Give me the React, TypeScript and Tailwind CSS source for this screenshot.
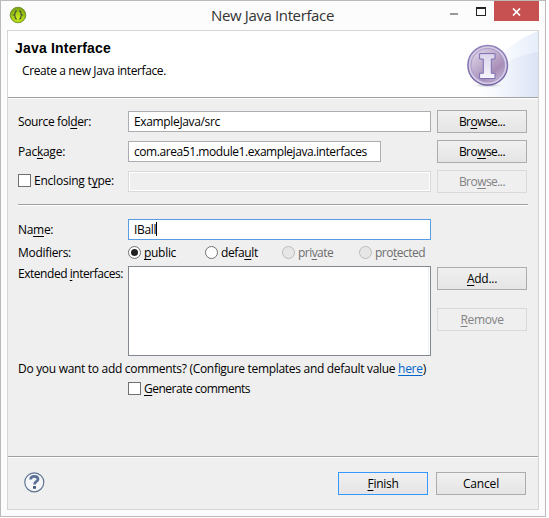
import type { ReactNode } from "react";

function Key({ children }: { children: ReactNode }) {
  return <span className="underline decoration-1 underline-offset-2 [text-decoration-skip-ink:none]">{children}</span>;
}

function Button({ children, tone = "normal", className = "" }: { children: ReactNode; tone?: "normal" | "disabled" | "primary"; className?: string }) {
  const tones = {
    normal: "border-[#acacac] bg-linear-to-b from-[#f0f0f0] to-[#e5e5e5] text-black",
    disabled: "border-[#d9d9d9] bg-[#efefef] text-[#838383]",
    primary: "border-[#3399ff] bg-linear-to-b from-[#f0f0f0] to-[#e5e5e5] text-black",
  };
  return (
    <button className={`flex h-[23px] w-[90px] shrink-0 items-start justify-center border pt-[2px] ${tones[tone]} ${className}`}>
      <span>{children}</span>
    </button>
  );
}

function Check() {
  return <span className="block size-[13px] shrink-0 border border-[#707070] bg-white" />;
}

function Radio({ children, checked, disabled, className = "" }: { children: ReactNode; checked?: boolean; disabled?: boolean; className?: string }) {
  return (
    <div className={`flex w-[77px] shrink-0 items-start gap-[3px] ${disabled ? "text-[#6d6d6d]" : ""}`}>
      <span className={`mt-[2px] flex size-[13px] shrink-0 items-center justify-center rounded-full border ${disabled ? "border-[#bcbcbc] bg-[#e6e6e6]" : "border-[#707070] bg-white"}`}>
        {checked && <span className="size-[7px] rounded-full bg-[#212121]" />}
      </span>
      <span className={className}>{children}</span>
    </div>
  );
}

function BracesIcon() {
  return (
    <svg width="18" height="18" viewBox="0 0 18 18">
      <defs>
        <radialGradient id="lime" cx="50%" cy="70%" r="60%">
          <stop offset="0" stopColor="#cbed1c" />
          <stop offset="0.65" stopColor="#a3cb12" />
          <stop offset="1" stopColor="#7fa813" />
        </radialGradient>
      </defs>
      <circle cx="9" cy="9" r="7.8" fill="url(#lime)" stroke="#668328" strokeWidth="0.8" />
      <path d="M7.8 5C6.4 5 6.2 5.5 6.2 6.5C6.2 8 5.9 8.7 5 9C5.9 9.3 6.2 10 6.2 11.5C6.2 12.5 6.4 13 7.8 13M10.2 5C11.6 5 11.8 5.5 11.8 6.5C11.8 8 12.1 8.7 13 9C12.1 9.3 11.8 10 11.8 11.5C11.8 12.5 11.6 13 10.2 13" fill="none" stroke="#47553a" strokeWidth="1.3" />
    </svg>
  );
}

function BannerArt() {
  return (
    <svg width="78" height="66" viewBox="460 31 78 66">
      <defs>
        <linearGradient id="sweep" gradientUnits="userSpaceOnUse" x1="478" y1="0" x2="538" y2="0">
          <stop offset="0" stopColor="#ffffff" />
          <stop offset="0.5" stopColor="#eff3fb" />
          <stop offset="1" stopColor="#dbe3f5" />
        </linearGradient>
        <linearGradient id="arc" gradientUnits="userSpaceOnUse" x1="500" y1="0" x2="538" y2="0">
          <stop offset="0" stopColor="#fbfcff" />
          <stop offset="1" stopColor="#e6eefa" />
        </linearGradient>
        <linearGradient id="orb" x1="0" y1="0" x2="0.8" y2="1">
          <stop offset="0" stopColor="#e4dcee" />
          <stop offset="0.4" stopColor="#c3b2d0" />
          <stop offset="0.75" stopColor="#a88db7" />
          <stop offset="1" stopColor="#c4b1d2" />
        </linearGradient>
        <linearGradient id="ring" x1="0" y1="0" x2="0" y2="1">
          <stop offset="0" stopColor="#8d7fb9" />
          <stop offset="1" stopColor="#7467a9" />
        </linearGradient>
        <linearGradient id="letter" x1="0" y1="0" x2="0" y2="1">
          <stop offset="0" stopColor="#dcd5ea" />
          <stop offset="1" stopColor="#f6f4fc" />
        </linearGradient>
        <radialGradient id="shade">
          <stop offset="0" stopColor="#8b8b93" stopOpacity="0.65" />
          <stop offset="1" stopColor="#ffffff" stopOpacity="0" />
        </radialGradient>
      </defs>
      <path d="M538 31C524 36 512 44 502 54V97H538Z" fill="url(#arc)" />
      <path d="M538 52C526 54 516 57 508 62C499 68 488 76 478 80V97H538Z" fill="url(#sweep)" />
      <ellipse cx="487.5" cy="85.5" rx="20" ry="2.5" fill="url(#shade)" />
      <circle cx="487.7" cy="65.3" r="19.8" fill="#d5cae2" stroke="url(#ring)" strokeWidth="1.5" />
      <circle cx="487.7" cy="65.3" r="16.8" fill="url(#orb)" stroke="#a799c8" strokeWidth="1" />
      <path d="M479.6 53.6H495V59H491.3V73.3H495V78.5H479.6V73.3H483.3V59H479.6Z" fill="url(#letter)" stroke="#7a70b4" strokeWidth="1" />
    </svg>
  );
}

function HelpIcon() {
  return (
    <svg width="21" height="21" viewBox="0 0 21 21">
      <circle cx="10.3" cy="10.3" r="9.5" fill="#f5f6f8" stroke="#5f7592" strokeWidth="1.2" />
      <path d="M6.6 7.6C6.6 5.4 8 4.3 10.3 4.3C12.7 4.3 14 5.4 14 7.2C14 9.6 10.5 9.4 10.5 12.6" fill="none" stroke="#5c7196" strokeWidth="2.7" />
      <rect x="9" y="14" width="3" height="2.8" rx="0.6" fill="#3f587f" />
    </svg>
  );
}

const label = "w-[110px] shrink-0 whitespace-nowrap";
const field = "h-[21px] shrink-0 border bg-white pl-[5px] pt-px whitespace-nowrap";

export default function App() {
  return (
    <div className="h-[518px] w-[549px] bg-white font-['Open_Sans','Liberation_Sans',sans-serif] text-[12px] leading-[18px] text-black">
      <div className="flex h-[517px] w-[546px] flex-col border border-[#bababa] bg-[#fcfcfc] px-[6px]">
        <header className="flex h-[29px] shrink-0 items-start">
          <div className="ml-[2px] mt-[5px] w-[202px]"><BracesIcon /></div>
          <h1 className="mt-[4px] w-[239px] whitespace-nowrap text-[15px] leading-5 tracking-[-0.37px] text-[#333]">New Java Interface</h1>
          <span className="mt-[12px] h-[2px] w-2 bg-[#999]" />
          <span className="ml-[18px] mt-[6px] h-[9px] w-[10px] border border-t-2 border-[#222]" />
          <span className="ml-[8px] flex h-5 w-[45px] items-center justify-center bg-[#c75050]">
            <svg className="mt-px" width="9" height="8" viewBox="0 0 9 8"><path d="M1 .5L8 7.5M8 .5L1 7.5" stroke="#fff" strokeWidth="1.7" /></svg>
          </span>
        </header>
        <main className="flex h-[480px] w-[532px] shrink-0 flex-col border border-[#d5d5d5] bg-[#efefef]">
          <section className="flex h-[68px] shrink-0 justify-between border-b border-white bg-[#a0a0a0] pb-px">
            <div className="grow bg-white pl-[7px] pt-[9px]">
              <h2 className="font-['Liberation_Sans',sans-serif] text-[14px] font-bold leading-4 tracking-[0.19px]">Java Interface</h2>
              <p className="ml-[7px] mt-[6px] tracking-[-0.38px]">Create a new Java interface.</p>
            </div>
            <div className="bg-white"><BannerArt /></div>
          </section>

          <section className="flex flex-col px-[10px]">
            <div className="mt-[11px] flex h-[30px] items-start">
              <div className={`${label} mt-[3px] tracking-[-0.37px]`}>Source fol<Key>d</Key>er:</div>
              <div className={`${field} mr-[6px] mt-px w-[303px] border-[#abadb3] tracking-[-0.35px]`}>ExampleJava/src</div>
              <Button className="tracking-[-0.55px]">Br<Key>o</Key>wse...</Button>
            </div>
            <div className="flex h-[30px] items-start">
              <div className={`${label} mt-[3px] tracking-[-0.25px]`}>Pac<Key>k</Key>age:</div>
              <div className={`${field} mr-[56px] mt-px w-[253px] border-[#abadb3] tracking-[-0.43px]`}>com.area51.module1.examplejava.interfaces</div>
              <Button className="tracking-[-0.55px]">Bro<Key>w</Key>se...</Button>
            </div>
            <div className="flex h-[34px] items-start">
              <div className="flex w-[110px] shrink-0 items-start gap-[3px] pt-[2px] tracking-[-0.22px]">
                <div className="pt-[2px]"><Check /></div>
                <span className="whitespace-nowrap">Enclosing t<Key>y</Key>pe:</span>
              </div>
              <div className="mr-[6px] mt-px h-[21px] w-[303px] border border-[#d9d9d9] bg-[#efefef] shadow-[inset_0_0_0_1px_#fff]" />
              <Button tone="disabled" className="tracking-[-0.55px]">Bro<Key>w</Key>se...</Button>
            </div>
            <div className="h-[2px] w-[510px] border-b border-white bg-[#a0a0a0]" />

            <div className="mt-[13px] flex h-[25px] items-start">
              <div className={`${label} mt-[2px] tracking-[-0.3px]`}>Na<Key>m</Key>e:</div>
              <div className={`${field} flex w-[303px] border-[#569de5] tracking-[-0.3px]`}>IBall<span className="mt-px h-[14px] w-px bg-black" /></div>
            </div>
            <div className="flex h-[22px] items-start">
              <div className={`${label} tracking-[-0.3px]`}>Modifiers:</div>
              <Radio checked className="tracking-[-0.3px]"><Key>p</Key>ublic</Radio>
              <Radio className="tracking-[-0.36px]">defa<Key>u</Key>lt</Radio>
              <Radio disabled className="tracking-[-0.55px]">pri<Key>v</Key>ate</Radio>
              <Radio disabled className="tracking-[-0.5px]">pro<Key>t</Key>ected</Radio>
            </div>
            <div className="flex h-[94px] items-start">
              <div className={`${label} -mt-px tracking-[-0.46px]`}>Extended <Key>i</Key>nterfaces:</div>
              <div className="mr-[6px] h-[90px] w-[303px] border border-[#828790] bg-white pr-px">
                <div className="h-full border-r border-[#edf5fc]" />
              </div>
              <div className="flex flex-col gap-[18px] pt-px">
                <Button className="tracking-[-0.28px]"><Key>A</Key>dd...</Button>
                <Button tone="disabled" className="tracking-[-0.37px]"><Key>R</Key>emove</Button>
              </div>
            </div>
            <p className="whitespace-nowrap tracking-[-0.3px]">Do you want to add comments? (Configure templates and default value <a className="text-[#0066cc] underline decoration-1 underline-offset-2">here</a>)</p>
            <div className="ml-[110px] mt-[2px] flex items-start gap-[3px] tracking-[-0.5px]">
              <div className="pt-[2px]"><Check /></div>
              <span><Key>G</Key>enerate comments</span>
            </div>
          </section>

          <footer className="mt-auto flex h-[53px] shrink-0 flex-col">
            <div className="h-[2px] shrink-0 border-b border-white bg-[#a0a0a0]" />
            <div className="flex items-start pl-[16px] pt-[14px]">
              <HelpIcon />
              <Button tone="primary" className="ml-[293px] tracking-[-0.28px]"><Key>F</Key>inish</Button>
              <Button className="ml-[8px] tracking-[-0.18px]">Cancel</Button>
            </div>
          </footer>
        </main>
      </div>
    </div>
  );
}
